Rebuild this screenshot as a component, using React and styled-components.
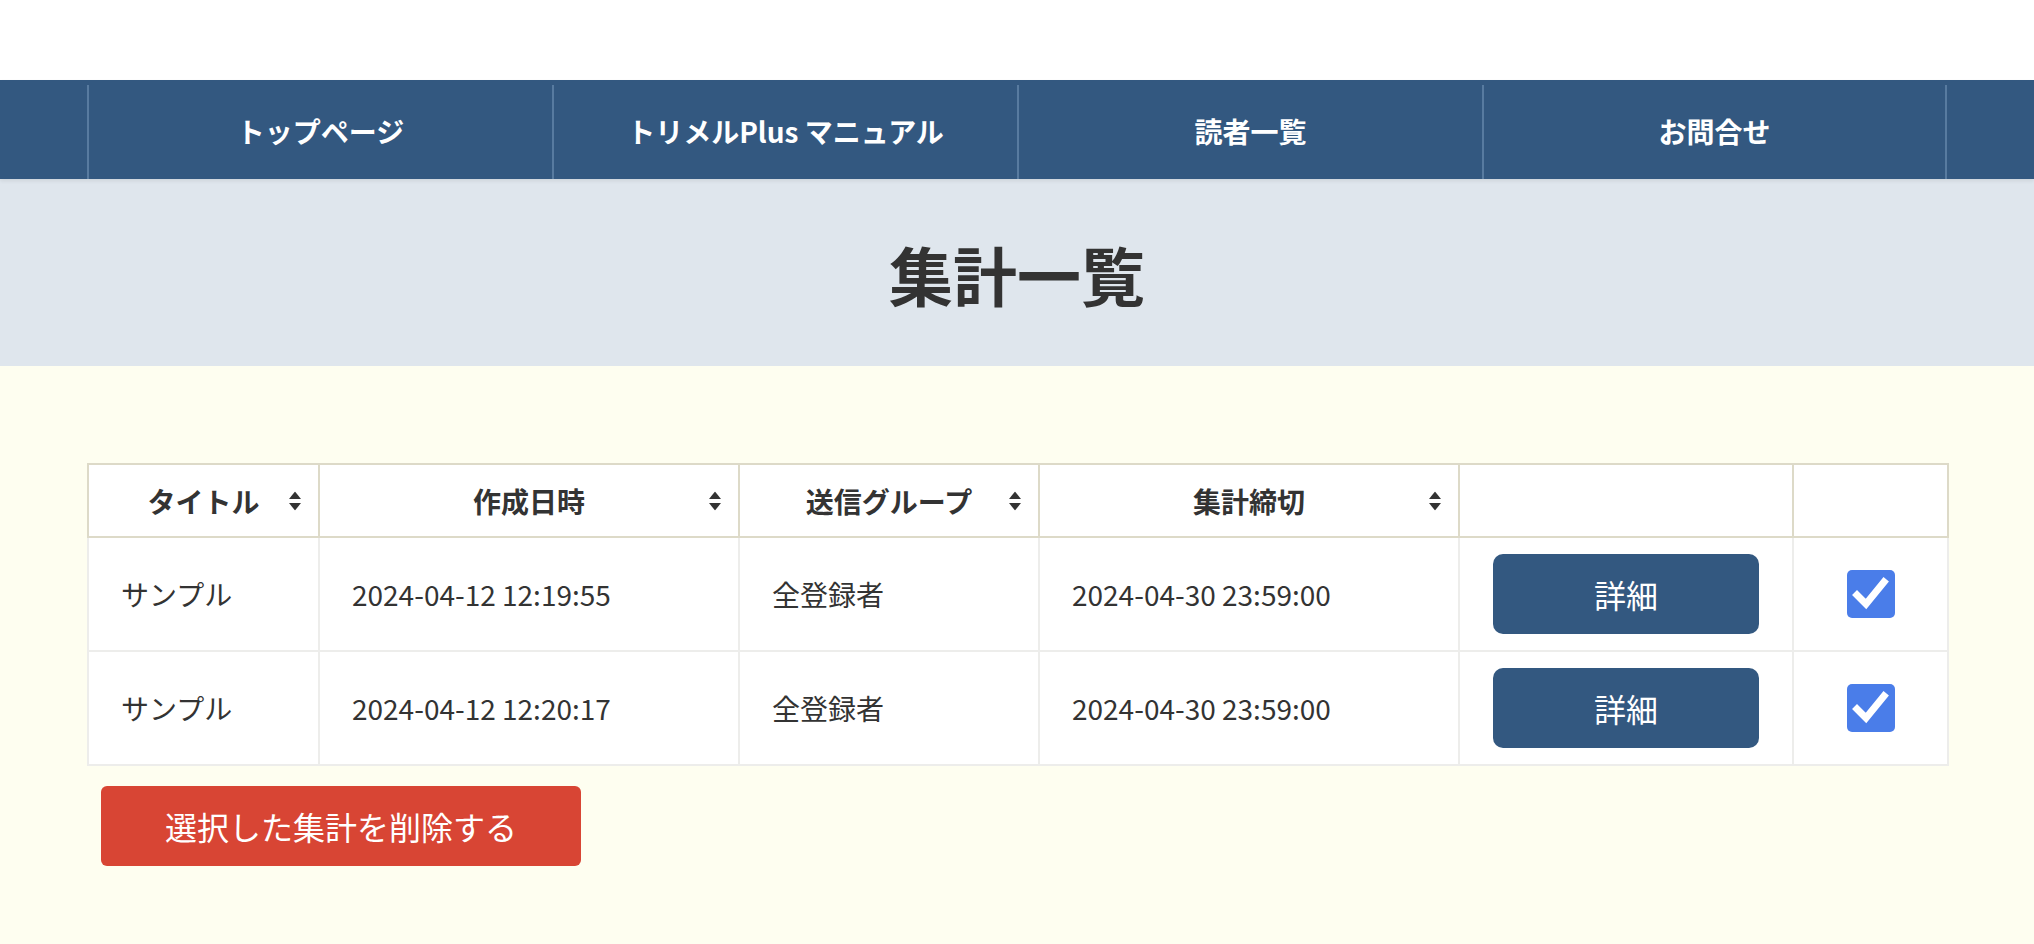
import React from 'react';
import styled, { createGlobalStyle } from 'styled-components';

const Global = createGlobalStyle`
  html, body { margin: 0; padding: 0; }
  body {
    font-family: "Noto Sans CJK JP", "Noto Sans", sans-serif;
    background: #fefef0;
    color: #333;
  }
`;

const Page = styled.div`
  min-height: 944px;
  background: #fefef0;
`;

const TopSpace = styled.div`
  height: 80px;
  background: #fff;
`;

const NavBar = styled.nav`
  background: #335880;
  height: 99px;
  box-sizing: border-box;
  padding-top: 5px;
  box-shadow: 0 2px 4px rgba(0, 0, 0, 0.08);
  position: relative;
  z-index: 1;
`;

const NavList = styled.ul`
  list-style: none;
  margin: 0 auto;
  padding: 0;
  width: 1860px;
  height: 100%;
  display: grid;
  grid-template-columns: repeat(4, 1fr);
`;

const NavItem = styled.li`
  display: flex;
  align-items: center;
  justify-content: center;
  border-left: 2px solid #587ba0;
  border-right: ${(p) => (p.$last ? '2px solid #587ba0' : 'none')};
  color: #fff;
  font-weight: 700;
  font-size: 28px;
  padding-bottom: 3px;
`;

const TitleBand = styled.header`
  height: 187px;
  background: #dfe6ed;
  display: flex;
  align-items: center;
  justify-content: center;
`;

const Title = styled.h1`
  margin: 0;
  font-size: 64px;
  font-weight: 700;
  color: #333;
`;

const Main = styled.main`
  width: 1860px;
  margin: 0 auto;
  padding-top: 97px;
`;

const Table = styled.table`
  width: 1860px;
  border-collapse: collapse;
  table-layout: fixed;
  background: #fff;
`;

const Th = styled.th`
  position: relative;
  height: 73px;
  box-sizing: border-box;
  border: 2px solid #dddac8;
  font-size: 28px;
  font-weight: 700;
  color: #333;
  text-align: center;
  padding: 0;
`;

const SortIcon = styled.svg`
  position: absolute;
  right: 17px;
  top: 50%;
  transform: translateY(-50%);
  width: 12px;
  height: 19px;
`;

const Td = styled.td`
  height: 114px;
  box-sizing: border-box;
  border: 2px solid #ededeb;
  font-size: 28px;
  color: #333;
  padding: ${(p) => (p.$center ? '0' : '0 0 0 32px')};
  text-align: ${(p) => (p.$center ? 'center' : 'left')};
`;

const DetailButton = styled.button`
  width: 266px;
  height: 80px;
  border: none;
  border-radius: 10px;
  background: #335880;
  color: #fff;
  font-family: inherit;
  font-size: 32px;
  cursor: pointer;
  vertical-align: middle;
`;

const CheckBox = styled.span`
  display: inline-flex;
  align-items: center;
  justify-content: center;
  width: 48px;
  height: 48px;
  border-radius: 5px;
  background: #4a7de9;
  vertical-align: middle;
`;

const DeleteButton = styled.button`
  margin: 20px 0 0 14px;
  width: 480px;
  height: 80px;
  border: none;
  border-radius: 6px;
  background: #d84534;
  color: #fff;
  font-family: inherit;
  font-size: 32px;
  cursor: pointer;
`;

const Sort = () => (
  <SortIcon viewBox="0 0 12 19">
    <path d="M6 0 L12 7.5 L0 7.5 Z" fill="#333" />
    <path d="M0 11.5 L12 11.5 L6 19 Z" fill="#333" />
  </SortIcon>
);

const Check = () => (
  <CheckBox>
    <svg width="40" height="40" viewBox="0 0 40 40">
      <path d="M6 21 L15 30 L33 8" stroke="#fff" strokeWidth="7" fill="none" strokeLinecap="square" />
    </svg>
  </CheckBox>
);

const rows = [
  { title: 'サンプル', created: '2024-04-12 12:19:55', group: '全登録者', deadline: '2024-04-30 23:59:00' },
  { title: 'サンプル', created: '2024-04-12 12:20:17', group: '全登録者', deadline: '2024-04-30 23:59:00' },
];

export default function App() {
  return (
    <Page>
      <Global />
      <TopSpace />
      <NavBar>
        <NavList>
          <NavItem>トップページ</NavItem>
          <NavItem>トリメルPlus マニュアル</NavItem>
          <NavItem>読者一覧</NavItem>
          <NavItem $last>お問合せ</NavItem>
        </NavList>
      </NavBar>
      <TitleBand>
        <Title>集計一覧</Title>
      </TitleBand>
      <Main>
        <Table>
          <colgroup>
            <col style={{ width: 231 }} />
            <col style={{ width: 420 }} />
            <col style={{ width: 300 }} />
            <col style={{ width: 420 }} />
            <col style={{ width: 334 }} />
            <col style={{ width: 155 }} />
          </colgroup>
          <thead>
            <tr>
              <Th>タイトル<Sort /></Th>
              <Th>作成日時<Sort /></Th>
              <Th>送信グループ<Sort /></Th>
              <Th>集計締切<Sort /></Th>
              <Th />
              <Th />
            </tr>
          </thead>
          <tbody>
            {rows.map((r, i) => (
              <tr key={i}>
                <Td>{r.title}</Td>
                <Td>{r.created}</Td>
                <Td>{r.group}</Td>
                <Td>{r.deadline}</Td>
                <Td $center><DetailButton>詳細</DetailButton></Td>
                <Td $center><Check /></Td>
              </tr>
            ))}
          </tbody>
        </Table>
        <DeleteButton>選択した集計を削除する</DeleteButton>
      </Main>
    </Page>
  );
}
